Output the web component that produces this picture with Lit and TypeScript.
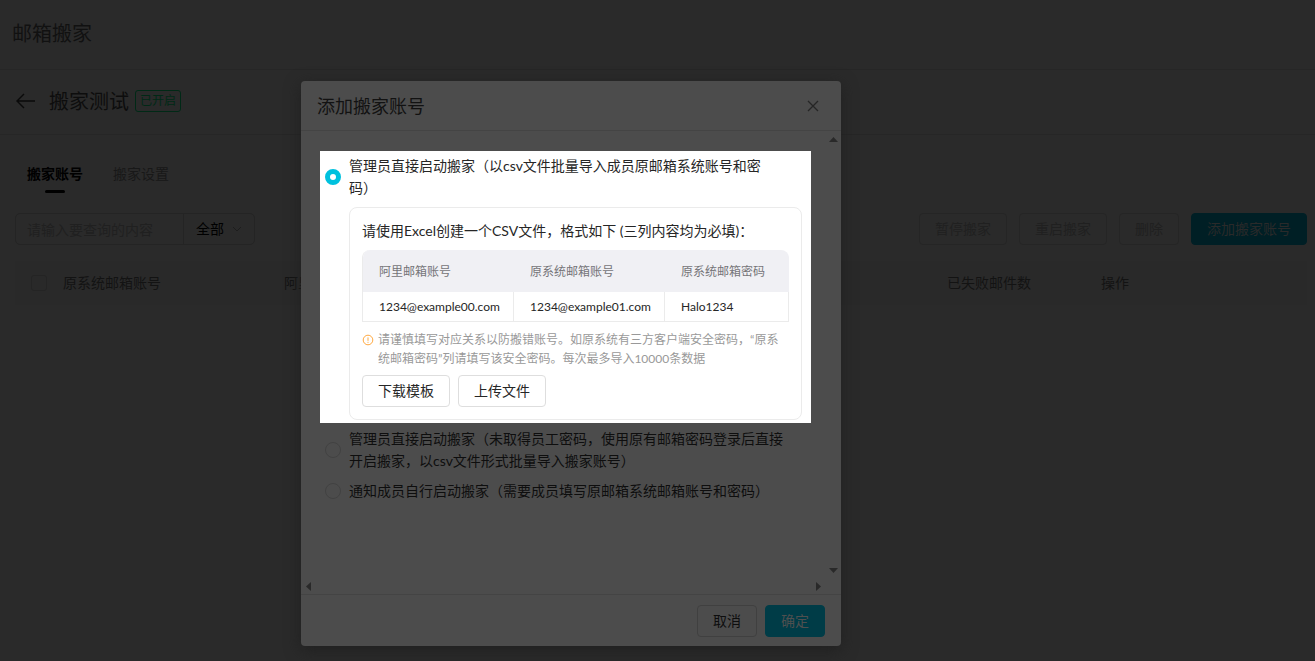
import { LitElement, html, css, svg } from "lit";
import { customElement, property, state } from "lit/decorators.js";

const arrows = {
  up: "0,5 4.5,0 9,5",
  down: "0,0 9,0 4.5,5",
  left: "5,0 5,9 0,4.5",
  right: "0,0 5,4.5 0,9",
};

@customElement("scroll-arrow")
class ScrollArrow extends LitElement {
  @property() dir: keyof typeof arrows = "up";

  static styles = css`
    :host {
      display: flex;
      align-items: center;
      justify-content: center;
      width: 15px;
      height: 17px;
    }
    .glyph {
      display: block;
      fill: #292929;
    }
  `;

  render() {
    const vertical = this.dir === "up" || this.dir === "down";
    return html`<svg class="glyph" width=${vertical ? 9 : 5} height=${vertical ? 5 : 9}>
      ${svg`<polygon points=${arrows[this.dir]} />`}
    </svg>`;
  }
}

@customElement("import-dialog")
class ImportDialog extends LitElement {
  @state() mode = "csv";

  static styles = css`
    * {
      box-sizing: border-box;
    }
    :host {
      display: flex;
      flex-direction: column;
      width: 540px;
      background: #4c4c4c;
      border-radius: 4px;
      box-shadow: 0 4px 16px #202020;
      color: #0e0e0e;
      font-size: 14px;
      line-height: 22px;
    }
    button {
      font: inherit;
      color: inherit;
      height: 32px;
      padding: 0 15px;
      border-radius: 4px;
      background: none;
      border: 1px solid #404040;
    }
    .head {
      display: flex;
      align-items: center;
      justify-content: space-between;
      height: 50px;
      padding: 0 16px;
      border-bottom: 1px solid #444;
    }
    .title {
      margin: 0;
      color: #121212;
      font-size: 18px;
      font-weight: 400;
      line-height: 26px;
    }
    .head .close {
      display: flex;
      align-items: center;
      justify-content: center;
      width: 24px;
      height: 24px;
      padding: 0;
      border: 0;
    }
    .close svg {
      stroke: #262626;
      stroke-width: 1.3;
    }
    .body {
      flex: 1;
      display: grid;
      grid-template-columns: 1fr 15px;
      grid-template-rows: 1fr 15px;
      min-height: 0;
    }
    .content {
      padding: 20px 15px 0 19px;
      overflow: hidden;
    }
    .vbar {
      display: flex;
      flex-direction: column;
      justify-content: space-between;
    }
    .hbar {
      display: flex;
      justify-content: space-between;
      align-items: center;
    }
    .foot {
      display: flex;
      justify-content: flex-end;
      gap: 8px;
      padding: 10px 16px 9px;
      border-top: 1px solid #444;
    }
    .foot .ok {
      background: #003c47;
      border-color: #003c47;
      color: #4f4f4f;
    }
    .spot {
      background: #fff;
      color: #262626;
      padding: 4px 9px 3px 5px;
    }
    .others {
      display: flex;
      flex-direction: column;
      gap: 8px;
      padding: 5px 9px 0 5px;
    }
    .option {
      display: grid;
      grid-template-columns: 16px 1fr;
      column-gap: 8px;
      align-items: center;
      padding-right: 16px;
    }
    .radio {
      appearance: none;
      width: 16px;
      height: 16px;
      margin: 0;
      border: 1px solid #424242;
      border-radius: 50%;
    }
    .radio:checked {
      border: 5px solid #00c1de;
      background: #fff;
    }
    .panel {
      display: flex;
      flex-direction: column;
      gap: 8px;
      margin: 8px 0 0 24px;
      padding: 12px;
      border: 1px solid #ebebeb;
      border-radius: 8px;
    }
    .lead {
      margin: 0;
    }
    .sample {
      border-collapse: separate;
      border-spacing: 0;
      table-layout: fixed;
      width: 100%;
      font-size: 12px;
      line-height: 18px;
      border-left: 1px solid #ebebeb;
      border-radius: 8px 8px 0 0;
      overflow: hidden;
    }
    .sample th {
      height: 42px;
      padding: 2px 16px 0;
      background: #f0f0f4;
      color: #757478;
      font-weight: 400;
      text-align: left;
    }
    .sample td {
      height: 30px;
      padding: 0 0 0 16px;
      border-right: 1px solid #ebebeb;
      border-bottom: 1px solid #ebebeb;
    }
    .wide {
      width: 151px;
    }
    .note {
      display: flex;
      gap: 4px;
      margin: 0 0 -1px;
      color: #999;
      font-size: 12px;
      line-height: 19px;
    }
    .note svg {
      flex: none;
      margin-top: 4px;
    }
    .actions {
      display: flex;
      gap: 8px;
    }
    .actions button {
      border-color: #dedede;
    }
  `;

  private option(value: string, text: string) {
    return html`<label class="option">
      <input
        class="radio"
        type="radio"
        name="mode"
        value=${value}
        .checked=${this.mode === value}
        @change=${() => (this.mode = value)}
      />
      <span>${text}</span>
    </label>`;
  }

  render() {
    return html`
      <div class="head">
        <h2 class="title">添加搬家账号</h2>
        <button class="close" aria-label="关闭">
          <svg width="12" height="12"><path d="M1 1 11 11M11 1 1 11" /></svg>
        </button>
      </div>
      <div class="body">
        <div class="content">
          <div class="spot">
            ${this.option("csv", "管理员直接启动搬家（以csv文件批量导入成员原邮箱系统账号和密码）")}
            <div class="panel">
              <p class="lead">请使用Excel创建一个CSV文件，格式如下 (三列内容均为必填)：</p>
              <table class="sample">
                <thead>
                  <tr>
                    <th class="wide">阿里邮箱账号</th>
                    <th class="wide">原系统邮箱账号</th>
                    <th>原系统邮箱密码</th>
                  </tr>
                </thead>
                <tbody>
                  <tr>
                    <td>1234@example00.com</td>
                    <td>1234@example01.com</td>
                    <td>Halo1234</td>
                  </tr>
                </tbody>
              </table>
              <p class="note">
                <svg width="12" height="12" fill="none" stroke="#ffa940">
                  <circle cx="6" cy="6" r="4.8" />
                  <path d="M6 3.4V6.8M6 7.8V8.8" />
                </svg>
                <span
                  >请谨慎填写对应关系以防搬错账号。如原系统有三方客户端安全密码，“原系统邮箱密码”列请填写该安全密码。每次最多导入10000条数据</span
                >
              </p>
              <div class="actions">
                <button>下载模板</button>
                <button>上传文件</button>
              </div>
            </div>
          </div>
          <div class="others">
            ${this.option(
              "password",
              "管理员直接启动搬家（未取得员工密码，使用原有邮箱密码登录后直接开启搬家，以csv文件形式批量导入搬家账号）"
            )}
            ${this.option("notify", "通知成员自行启动搬家（需要成员填写原邮箱系统邮箱账号和密码）")}
          </div>
        </div>
        <div class="vbar">
          <scroll-arrow dir="up"></scroll-arrow>
          <scroll-arrow dir="down"></scroll-arrow>
        </div>
        <div class="hbar">
          <scroll-arrow dir="left"></scroll-arrow>
          <scroll-arrow dir="right"></scroll-arrow>
        </div>
      </div>
      <div class="foot">
        <button>取消</button>
        <button class="ok">确定</button>
      </div>
    `;
  }
}

@customElement("app-root")
class AppRoot extends LitElement {
  static styles = css`
    * {
      box-sizing: border-box;
    }
    :host {
      display: block;
      position: relative;
      min-height: 100vh;
      background: #2a2a2a;
      color: #0d0d0d;
      font-family: Lato, "Noto Sans CJK SC", sans-serif;
      font-size: 14px;
      line-height: 22px;
      text-spacing-trim: space-all;
    }
    button,
    input,
    select {
      font: inherit;
      color: inherit;
      background: none;
      margin: 0;
    }
    .top,
    .sub {
      display: flex;
      align-items: center;
      border-bottom: 1px solid #262626;
    }
    .top {
      height: 70px;
      padding: 0 12px 4px;
    }
    .sub {
      height: 65px;
      padding: 0 16px 2px;
    }
    .name {
      margin: 0;
      font-size: 20px;
      font-weight: 400;
      line-height: 28px;
    }
    .top .name {
      color: #111;
    }
    .back {
      display: flex;
      padding: 0;
      margin-right: 13px;
      border: 0;
    }
    .back svg {
      fill: none;
      stroke: #0a0a0a;
      stroke-width: 1.4;
    }
    .status {
      margin-left: 6px;
      padding: 0 4px;
      border: 1px solid #002916;
      border-radius: 3px;
      color: #002916;
      font-size: 12px;
      line-height: 20px;
    }
    .main {
      padding: 28px 8px 0 15px;
    }
    .tabs {
      display: flex;
      gap: 30px;
      padding-left: 12px;
    }
    .tab {
      display: flex;
      flex-direction: column;
      align-items: center;
      gap: 5px;
      height: 30px;
      padding: 0;
      border: 0;
      color: #181818;
    }
    .active {
      color: #000;
      font-weight: 700;
    }
    .active::after {
      content: "";
      width: 20px;
      height: 3px;
      border-radius: 2px;
      background: #000;
    }
    .tools {
      display: flex;
      align-items: center;
      gap: 12px;
      margin: 20px 0 16px;
    }
    .search {
      display: flex;
      align-items: center;
      width: 240px;
      height: 32px;
      margin-right: auto;
      border: 1px solid #242424;
      border-radius: 5px;
    }
    .query {
      width: 168px;
      height: 100%;
      padding: 0 11px;
      border: 0;
      border-right: 1px solid #242424;
      outline: 0;
    }
    .query::placeholder {
      color: #202020;
      opacity: 1;
    }
    .scope {
      appearance: none;
      flex: 1;
      height: 100%;
      padding: 0 12px;
      border: 0;
      color: #000;
    }
    .chev {
      margin: 0 12px 0 -22px;
      fill: none;
      stroke: #1d1d1d;
      pointer-events: none;
    }
    .btn {
      height: 32px;
      padding: 0 15px;
      border: 1px solid #252525;
      border-radius: 4px;
    }
    .btn:disabled {
      color: #202020;
    }
    .primary {
      background: #001f25;
      border-color: #001f25;
      color: #2a2a2a;
    }
    .list {
      width: 100%;
      border-spacing: 0;
      table-layout: fixed;
      background: #292929;
    }
    .list th {
      height: 44px;
      padding: 0;
      font-weight: 400;
      text-align: left;
      color: #131313;
    }
    .list .pick {
      width: 48px;
      padding-left: 16px;
    }
    .account {
      width: 221px;
    }
    .failed {
      width: 154px;
    }
    .op {
      width: 206px;
    }
    .check {
      appearance: none;
      display: block;
      width: 16px;
      height: 16px;
      border: 1px solid #242424;
      border-radius: 3px;
    }
    .overlay {
      position: absolute;
      inset: 0;
      display: flex;
      justify-content: center;
      padding: 81px 173px 15px 0;
    }
  `;

  render() {
    return html`
      <header class="top"><h1 class="name">邮箱搬家</h1></header>
      <div class="sub">
        <button class="back" aria-label="返回">
          <svg width="20" height="16"><path d="M8 1 1 8 8 15M1 8H19" /></svg>
        </button>
        <h2 class="name">搬家测试</h2>
        <span class="status">已开启</span>
      </div>
      <main class="main">
        <nav class="tabs">
          <button class="tab active">搬家账号</button>
          <button class="tab">搬家设置</button>
        </nav>
        <div class="tools">
          <div class="search">
            <input class="query" aria-label="查询" placeholder="请输入要查询的内容" />
            <select class="scope" aria-label="范围">
              <option>全部</option>
            </select>
            <svg class="chev" width="10" height="6"><path d="M1 1 5 5 9 1" /></svg>
          </div>
          <button class="btn" disabled>暂停搬家</button>
          <button class="btn" disabled>重启搬家</button>
          <button class="btn" disabled>删除</button>
          <button class="btn primary">添加搬家账号</button>
        </div>
        <table class="list">
          <thead>
            <tr>
              <th class="pick"><input class="check" type="checkbox" aria-label="全选" /></th>
              <th class="account">原系统邮箱账号</th>
              <th>阿里邮箱账号</th>
              <th class="failed">已失败邮件数</th>
              <th class="op">操作</th>
            </tr>
          </thead>
        </table>
      </main>
      <div class="overlay"><import-dialog role="dialog" aria-label="添加搬家账号"></import-dialog></div>
    `;
  }
}
